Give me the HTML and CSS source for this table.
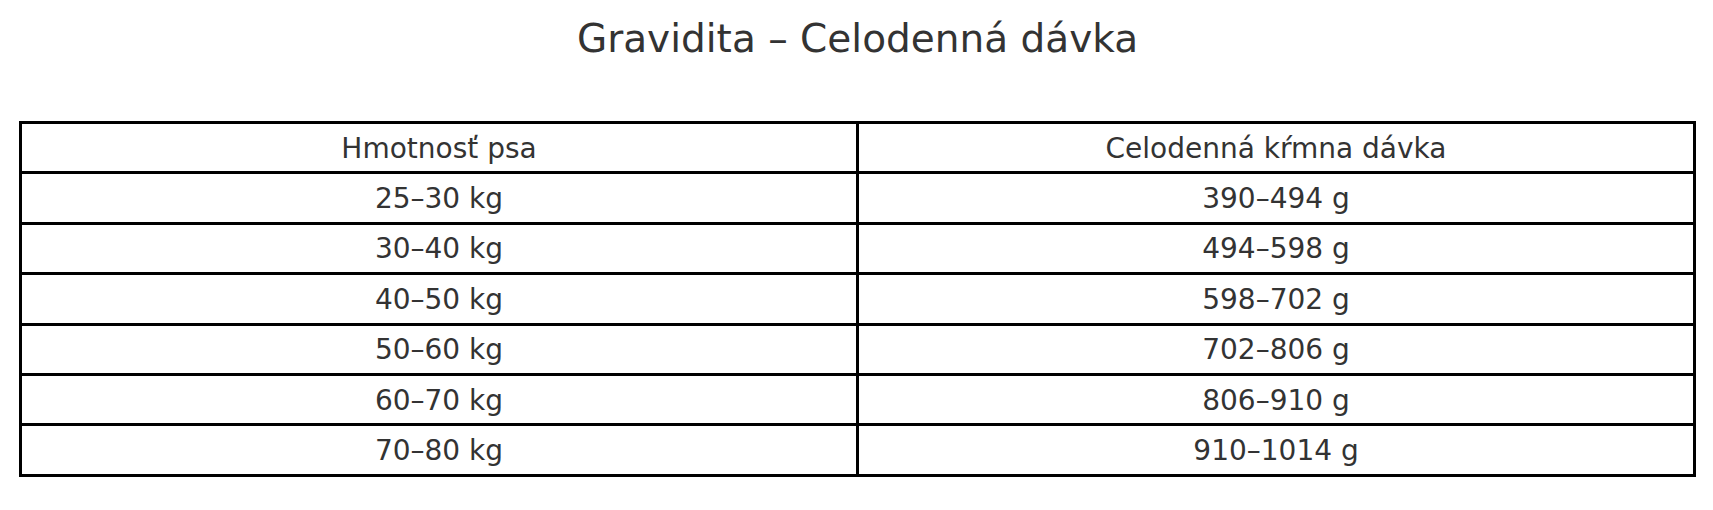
FILE: index.html
```html
<!DOCTYPE html>
<html lang="sk">
<head>
<meta charset="utf-8">
<title>Gravidita – Celodenná dávka</title>
<link rel="stylesheet" href="styles.css">
</head>
<body>
<main class="page">
  <h1 class="title">Gravidita – Celodenná dávka</h1>
  <table class="feed">
    <thead>
      <tr><th>Hmotnosť psa</th><th>Celodenná kŕmna dávka</th></tr>
    </thead>
    <tbody>
      <tr><td>25–30 kg</td><td>390–494 g</td></tr>
      <tr><td>30–40 kg</td><td>494–598 g</td></tr>
      <tr><td>40–50 kg</td><td>598–702 g</td></tr>
      <tr><td>50–60 kg</td><td>702–806 g</td></tr>
      <tr><td>60–70 kg</td><td>806–910 g</td></tr>
      <tr><td>70–80 kg</td><td>910–1014 g</td></tr>
    </tbody>
  </table>
</main>
</body>
</html>
```
FILE: styles.css
```css
html, body {
  margin: 0;
  padding: 0;
  background: #ffffff;
}
.page {
  width: 1713px;
  height: 510px;
  padding: 16px 17px 0 19px;
  box-sizing: border-box;
  font-family: "DejaVu Sans", sans-serif;
  color: #333333;
}
.title {
  margin: 0 0 59px 0;
  font-size: 39px;
  font-weight: normal;
  line-height: 46px;
  text-align: center;
}
.feed {
  width: 100%;
  border-collapse: collapse;
  table-layout: fixed;
  border: 3px solid #000;
}
.feed th, .feed td {
  border: 3px solid #000;
  height: 46.4px;
  padding: 1px 0 0 0;
  font-size: 28px;
  font-weight: normal;
  line-height: 33px;
  text-align: center;
  vertical-align: middle;
  color: #333333;
}
```
